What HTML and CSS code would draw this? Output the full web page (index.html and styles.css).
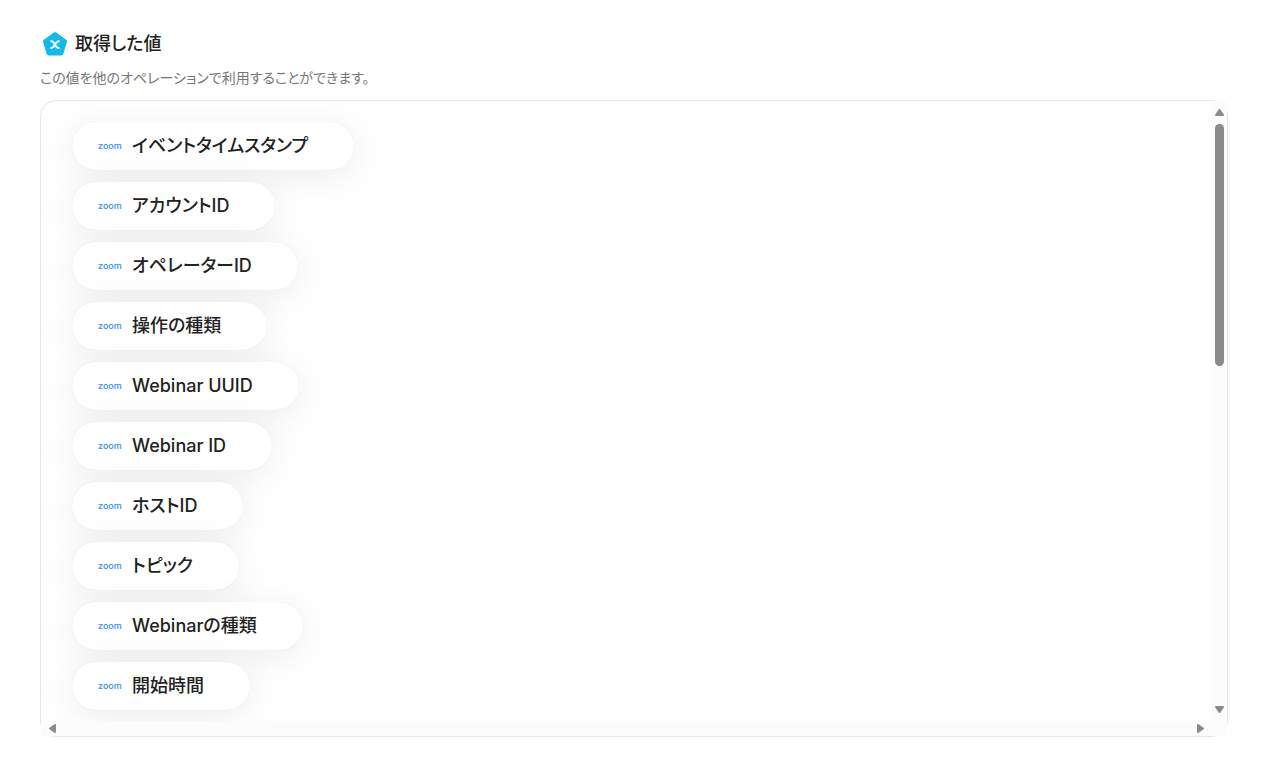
FILE: index.html
```html
<!DOCTYPE html>
<html lang="ja">
<head>
    <meta charset="UTF-8">
    <title>取得した値</title>
    <link rel="stylesheet" href="styles.css">
</head>
<body>
<div class="output">
    <div class="title">
        <svg class="title-icon" viewBox="0 0 30 30" width="30" height="30">
            <path d="M15 5 L25 12.4 L21.4 24.4 H8.6 L5 12.4 Z" fill="#12b9ec" stroke="#12b9ec" stroke-width="4" stroke-linejoin="round"/>
            <path d="M11.2 12.2 C13.2 12 13.8 13.2 15 15.6 C16.2 18 16.8 19.2 18.8 19 M18.8 12.2 C16.8 12.4 16 13.8 15 15.6 C13.8 17.6 13.2 19 11.2 19" fill="none" stroke="#fff" stroke-width="2" stroke-linecap="round"/>
        </svg>
        <h1>取得した値</h1>
    </div>
    <p class="note">この値を他のオペレーションで利用することができます。</p>
    <div class="box">
        <div class="view">
            <ul class="list">
                <li><span class="logo">zoom</span>イベントタイムスタンプ</li>
                <li><span class="logo">zoom</span>アカウントID</li>
                <li><span class="logo">zoom</span>オペレーターID</li>
                <li><span class="logo">zoom</span>操作の種類</li>
                <li><span class="logo">zoom</span>Webinar UUID</li>
                <li><span class="logo">zoom</span>Webinar ID</li>
                <li><span class="logo">zoom</span>ホストID</li>
                <li><span class="logo">zoom</span>トピック</li>
                <li><span class="logo">zoom</span>Webinarの種類</li>
                <li><span class="logo">zoom</span>開始時間</li>
            </ul>
        </div>
        <div class="bar bar-y">
            <svg viewBox="0 0 9 7" width="9" height="7"><path d="M4.5 1 L8 6 H1 Z"/></svg>
            <div class="thumb"></div>
            <svg class="end" viewBox="0 0 9 7" width="9" height="7"><path d="M4.5 6 L8 1 H1 Z"/></svg>
        </div>
        <div class="bar bar-x">
            <svg viewBox="0 0 7 9" width="7" height="9"><path d="M1 4.5 L6 1 V8 Z"/></svg>
            <svg class="end" viewBox="0 0 7 9" width="7" height="9"><path d="M6 4.5 L1 1 V8 Z"/></svg>
        </div>
        <div class="corner"></div>
    </div>
</div>
</body>
</html>
```
FILE: styles.css
```css
* {
    padding: 0;
    margin: 0;
    box-sizing: border-box;
}

body {
    font-family: Inter, "Noto Sans CJK JP", sans-serif;
    font-feature-settings: "palt";
    color: #222;
    background: #fff;
}

.output {
    display: flex;
    flex-direction: column;
    height: 100vh;
    padding: 28px 39px 30px 40px;
}

.title {
    display: flex;
    align-items: center;
    gap: 5px;
    height: 32px;
}

.title h1 {
    font-size: 18px;
    font-weight: 500;
    line-height: 32px;
}

.note {
    height: 40px;
    padding-top: 8px;
    font-size: 14px;
    line-height: 20px;
    color: #777;
}

.box {
    flex: 1;
    display: grid;
    grid-template-columns: 1fr 15px;
    grid-template-rows: 1fr 15px;
    min-height: 0;
    border: 1px solid #e6e6e6;
    border-radius: 16px;
}

.view {
    min-height: 0;
    border-top-left-radius: 15px;
    overflow: hidden;
}

.list {
    display: flex;
    flex-direction: column;
    align-items: flex-start;
    gap: 12px;
    padding: 21px 31px;
    list-style: none;
}

.list li {
    display: flex;
    align-items: center;
    height: 48px;
    padding: 0 46px 0 26px;
    border-radius: 24px;
    background: #fff;
    box-shadow: 0 6px 36px rgba(0, 0, 0, 0.08), 0 0 1px rgba(0, 0, 0, 0.1);
    font-size: 18px;
    font-weight: 500;
    line-height: 48px;
    white-space: nowrap;
}

.logo {
    width: 34px;
    font-size: 9px;
    color: #2d8cff;
}

/* scrollbars */
.bar {
    display: flex;
    align-items: center;
    background: #fcfcfc;
}

.bar-y {
    flex-direction: column;
    gap: 8px;
    padding: 8px 0;
}

.bar-x {
    justify-content: space-between;
    padding: 0 8px;
}

.bar path {
    fill: #8b8b8b;
    stroke: #8b8b8b;
    stroke-width: 2px;
    stroke-linejoin: round;
}

.bar-y .end {
    margin-top: auto;
}

.thumb {
    width: 9px;
    height: 40%;
    border-radius: 5px;
    background: #8b8b8b;
}

.corner {
    background: #fcfcfc;
}
```
